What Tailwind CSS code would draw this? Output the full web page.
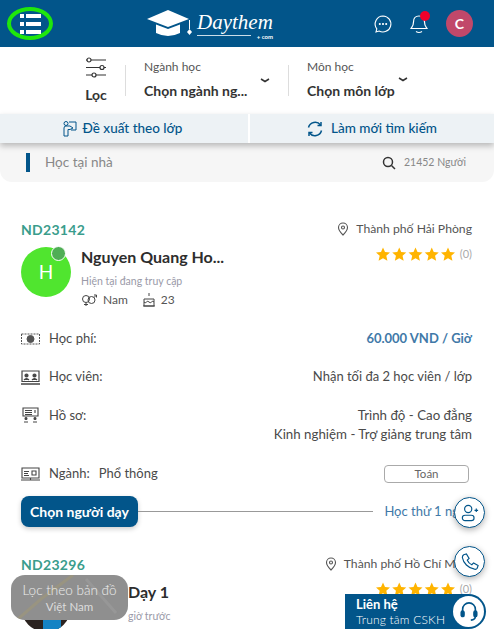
<!DOCTYPE html>
<html lang="vi">
<head>
    <meta charset="UTF-8">
    <meta name="viewport" content="width=device-width, initial-scale=1.0">
    <title>Daythem</title>
    <script src="https://cdn.jsdelivr.net/npm/@tailwindcss/browser@4"></script>
</head>
<body class="relative h-[629px] w-[494px] overflow-hidden bg-white font-['Lato','Noto_Sans',sans-serif] text-[13px] text-[#4a4a4a]">
    <!-- header -->
    <header class="flex h-[47px] items-center bg-[#02558a] pl-[7px] pr-[21px]">
        <button class="flex h-[33px] w-[46px] flex-col items-center justify-center gap-[4px] rounded-[50%] border-4 border-[#1fe60c]">
            <span class="flex h-[4px] w-[21px] gap-[2px]"><i class="w-[4px] bg-white"></i><i class="flex-1 bg-white"></i></span>
            <span class="flex h-[4px] w-[21px] gap-[2px]"><i class="w-[4px] bg-white"></i><i class="flex-1 bg-white"></i></span>
            <span class="flex h-[4px] w-[21px] gap-[2px]"><i class="w-[4px] bg-white"></i><i class="flex-1 bg-white"></i></span>
        </button>
        <div class="ml-[94px] flex items-center">
            <svg width="46" height="28" viewBox="0 0 46 28" fill="#fff">
                <path d="M21 0 42 9 21 17 0 9z"/>
                <path d="M9 14.500 21 19 33 14.500V23Q21 29 9 23z"/>
                <path d="M42 10h1v9h-1z"/>
                <path d="M42.500 19l2.500 3-2.500 3-2.500-3z"/>
            </svg>
            <div class="relative ml-[4px] h-[28px] w-[76px] text-white">
                <span class="block font-['Liberation_Serif',serif] text-[21px] leading-[24px] italic">Daythem</span>
                <span class="absolute top-[25px] left-0 h-px w-[54px] bg-white/80"></span>
                <span class="absolute right-0 top-[23px] text-[6px] leading-[7px] font-bold">+ com</span>
            </div>
        </div>
        <div class="ml-auto flex items-center">
            <svg width="20" height="20" viewBox="0 0 20 20" fill="none" stroke="#fff" stroke-width="1.100">
                <path d="M10 2a8 8 0 1 1-4 15l-3 1 .8-3.200A8 8 0 0 1 10 2z"/>
                <circle cx="6.800" cy="10" r=".5" fill="#fff"/><circle cx="10" cy="10" r=".5" fill="#fff"/><circle cx="13.200" cy="10" r=".5" fill="#fff"/>
            </svg>
            <div class="relative ml-[16px] h-[24px] w-[20px]">
                <svg width="20" height="24" viewBox="0 0 20 24" fill="none" stroke="#fff" stroke-width="1.200">
                    <path d="M10 4c-4 0-5.500 3-5.500 6 0 4-1.500 5-2.500 6.500h16c-1-1.500-2.500-2.500-2.500-6.500 0-3-1.500-6-5.500-6z"/>
                    <path d="M7 19.500q3 2 6 0"/>
                </svg>
                <span class="absolute -top-[1px] left-[11px] h-[10px] w-[10px] rounded-full bg-[#f0002a]"></span>
            </div>
            <div class="ml-[17px] flex h-[27px] w-[27px] items-center justify-center rounded-full bg-[#c1486a] text-[14px] font-bold text-white">C</div>
        </div>
    </header>

    <!-- filter -->
    <section class="flex h-[67px] items-start pt-[9px]">
        <div class="ml-[85px] flex w-[22px] flex-col items-center">
            <svg width="22" height="24" viewBox="0 0 22 24" fill="none" stroke="#333" stroke-width="1.200">
                <path d="M6 4h15M1 4h1M1 11.500h14M19 11.500h2M1 19h6M11 19h10"/>
                <circle cx="4" cy="4" r="2"/><circle cx="17" cy="11.500" r="2"/><circle cx="9" cy="19" r="2"/>
            </svg>
            <span class="mt-[4px] text-[14px] font-bold text-[#333]">Lọc</span>
        </div>
        <div class="mt-[9px] ml-[18px] h-[31px] w-px bg-[#ddd]"></div>
        <div class="ml-[18px] w-[121px]">
            <p class="mt-[2px] text-[12px] leading-[18px] text-[#555]">Ngành học</p>
            <p class="mt-[6px] text-[14px] leading-[18px] font-bold whitespace-nowrap text-[#333]">Chọn ngành ng...</p>
        </div>
        <svg class="mt-[21px] -ml-[5px]" width="10" height="7" viewBox="0 0 10 7" fill="none" stroke="#333" stroke-width="1.500"><path d="M1 2l4 2.500L9 2"/></svg>
        <div class="mt-[9px] ml-[18px] h-[31px] w-px bg-[#ddd]"></div>
        <div class="ml-[18px] w-[91px]">
            <p class="mt-[2px] text-[12px] leading-[18px] text-[#555]">Môn học</p>
            <p class="mt-[6px] text-[14px] leading-[18px] font-bold whitespace-nowrap text-[#333]">Chọn môn lớp</p>
        </div>
        <svg class="mt-[20px]" width="10" height="7" viewBox="0 0 10 7" fill="none" stroke="#333" stroke-width="1.500"><path d="M1 2l4 2.500L9 2"/></svg>
    </section>

    <!-- actions -->
    <section class="relative z-10 flex h-[29px] gap-[2px] shadow-[0_3px_6px_rgba(0,0,0,.25)]">
        <button class="flex flex-1 items-center justify-center gap-[6px] bg-[#edf2f5] pr-[4px] text-[13.500px] font-medium text-[#02558a]">
            <svg width="15" height="17" viewBox="0 0 15 17" fill="none" stroke="#02558a" stroke-width="1"><circle cx="4" cy="3.500" r="2"/><path d="M7 2h7v8H9M2 16V8q0-2 2-2h4l3 2-3 1.500H6V16z"/></svg>
            Đề xuất theo lớp
        </button>
        <button class="flex flex-1 items-center justify-center gap-[8px] bg-[#edf2f5] text-[13.500px] font-medium text-[#02558a]">
            <svg width="16" height="16" viewBox="0 0 16 16" fill="none" stroke="#02558a" stroke-width="1.500"><path d="M1.500 6.500A6.800 6.800 0 0 1 13.500 4M14.500 9.500A6.800 6.800 0 0 1 2.500 12"/><path d="M14 1v3.500h-3.500M2 15v-3.500h3.500"/></svg>
            Làm mới tìm kiếm
        </button>
    </section>

    <!-- search strip -->
    <section class="flex h-[39px] items-center rounded-b-xl bg-[#f6f6f6] pr-[28px] pl-[26px]">
        <span class="h-[19px] w-[4px] bg-[#02558a]"></span>
        <span class="ml-[15px] text-[13.500px] text-[#888]">Học tại nhà</span>
        <svg class="ml-auto" width="14" height="14" viewBox="0 0 14 14" fill="none" stroke="#333" stroke-width="1.500"><circle cx="6" cy="6" r="4.500"/><path d="M9.500 9.500 13 13"/></svg>
        <span class="ml-[8px] text-[10.500px] text-[#888]">21452 Người</span>
    </section>

    <!-- first card -->
    <article class="pt-[38px] pr-[22px] pl-[21px]">
        <div class="flex h-[18px] items-center justify-between">
            <span class="text-[14px] font-bold tracking-[.3px] text-[#3a9d8c]">ND23142</span>
            <span class="flex items-center gap-[7px] text-[12.200px] text-[#555]">
                <svg width="12" height="14" viewBox="0 0 12 14" fill="none" stroke="#555" stroke-width="1.100"><path d="M6 13S1.500 8.500 1.500 5.500a4.500 4.500 0 0 1 9 0C10.500 8.500 6 13 6 13z"/><circle cx="6" cy="5.500" r="1.500"/></svg>
                Thành phố Hải Phòng
            </span>
        </div>
        <div class="mt-[2px] flex items-start pt-[5px]">
            <div class="relative mt-[2px] flex h-[50px] w-[50px] shrink-0 items-center justify-center rounded-full bg-[#50e52f] text-[19px] text-white">
                H
                <span class="absolute -top-[1px] left-[30px] h-[15px] w-[15px] rounded-full border border-white bg-[#4fae55]"></span>
            </div>
            <div class="ml-[10px] min-w-0 flex-1 pt-[2px]">
                <p class="text-[16px] leading-[20px] font-bold text-[#2d2d2d]">Nguyen Quang Ho...</p>
                <p class="mt-[8px] text-[10.500px] leading-[13px] text-[#9a9aa8]">Hiện tại đang truy cập</p>
                <div class="mt-[3px] flex items-center text-[12px] text-[#555]">
                    <svg width="16" height="13" viewBox="0 0 16 13" fill="none" stroke="#444" stroke-width="1"><circle cx="5" cy="5" r="3.500"/><path d="M5 8.500V12M3 10.500h4"/><circle cx="10.500" cy="6" r="3.500"/><path d="M13 3.500l2-2M13 1h2.500v2.500"/></svg>
                    <span class="ml-[6px]">Nam</span>
                    <svg class="ml-[15px]" width="12" height="14" viewBox="0 0 12 14" fill="none" stroke="#444" stroke-width="1"><path d="M6 0v3M1 13V6h10v7zM0 13h12M1 9q1.200 1.500 2.500 0t2.500 0 2.500 0 2.500 0"/></svg>
                    <span class="ml-[6px]">23</span>
                </div>
            </div>
            <div class="mt-[1px] flex items-center gap-[5px]">
                <svg width="79" height="15" viewBox="0 0 79 15" fill="#ffb400"><path id="s1" d="M7 .5l2 4.500 5 .5-3.700 3.300 1.100 4.900L7 11.200l-4.400 2.500 1.100-4.900L0 5.500 5 5z"/><use href="#s1" x="16.250"/><use href="#s1" x="32.500"/><use href="#s1" x="48.750"/><use href="#s1" x="65"/></svg>
                <span class="text-[11px] text-[#aaa]">(0)</span>
            </div>
        </div>

        <div class="mt-[21px] flex h-[18px] items-center justify-between">
            <span class="flex items-center gap-[9px]">
                <svg width="19" height="12" viewBox="0 0 19 12" fill="none" stroke="#555" stroke-width="1"><path d="M.5 1h18v10H.5z" stroke-dasharray="2 1"/><circle cx="9.500" cy="6" r="3.500" fill="#555"/></svg>
                Học phí:
            </span>
            <span class="text-[13px] font-bold text-[#4179a8]">60.000 VND / Giờ</span>
        </div>
        <div class="mt-[20px] flex h-[18px] items-center justify-between">
            <span class="flex items-center gap-[9px]">
                <svg width="19" height="15" viewBox="0 0 19 15" fill="none" stroke="#444" stroke-width="1.200"><path d="M1 1h17v10.500H1z"/><path d="M0 14h19" stroke-width="1.500"/><circle cx="5.500" cy="5.500" r="1.500" fill="#444"/><circle cx="13.500" cy="5.500" r="1.500" fill="#444"/><path d="M3 10q2.500-3 5 0M11 10q2.500-3 5 0" fill="#444"/></svg>
                Học viên:
            </span>
            <span class="text-[13px]">Nhận tối đa 2 học viên / lớp</span>
        </div>
        <div class="mt-[20px] flex items-start justify-between">
            <span class="flex items-center gap-[9px] leading-[18px]">
                <svg width="19" height="16" viewBox="0 0 19 16" fill="none" stroke="#444" stroke-width="1.100"><path d="M2 1h15v8H2z"/><path d="M4 3.500h7M4 5.500h7M4 7.500h7M14 3v3"/><circle cx="5" cy="11.500" r="1" fill="#444"/><circle cx="14" cy="11.500" r="1" fill="#444"/><path d="M3 15h4M12 15h4"/></svg>
                Hồ sơ:
            </span>
            <span class="text-right text-[13.300px] leading-[19px]">Trình độ - Cao đẳng<br>Kinh nghiệm - Trợ giảng trung tâm</span>
        </div>
        <div class="mt-[21px] flex h-[18px] items-center">
            <svg width="19" height="15" viewBox="0 0 19 15" fill="none" stroke="#444" stroke-width="1.100"><path d="M1 1h17v10H1z"/><path d="M3 4.500h5M3 6.500h4M3 8.500h5M11 4h4v4h-4zM0 13h19M9.500 11v2"/></svg>
            <span class="ml-[9px]">Ngành:</span>
            <span class="ml-[9px]">Phổ thông</span>
            <span class="mr-[3px] ml-auto flex h-[18px] w-[85px] items-center justify-center rounded-[4px] border border-[#aaa] text-[11.500px] text-[#666]">Toán</span>
        </div>
        <div class="mt-[13px] flex h-[31px] items-center">
            <button class="h-[31px] w-[117px] shrink-0 rounded-lg bg-[#02558a] text-[14px] font-bold text-white shadow-[0_2px_5px_rgba(0,0,0,.2)]">Chọn người dạy</button>
            <span class="h-px flex-1 bg-[#999]"></span>
            <span class="ml-[11px] text-[13px] whitespace-nowrap text-[#4179a8]">Học thử 1 ngày</span>
        </div>
    </article>

    <!-- second card, cut off by the window -->
    <article class="pt-[28px] pr-[22px] pl-[21px]">
        <div class="flex h-[18px] items-center justify-between">
            <span class="text-[14px] font-bold tracking-[.3px] text-[#3a9d8c]">ND23296</span>
            <span class="flex items-center gap-[7px] text-[12.200px] text-[#555]">
                <svg width="12" height="14" viewBox="0 0 12 14" fill="none" stroke="#555" stroke-width="1.100"><path d="M6 13S1.500 8.500 1.500 5.500a4.500 4.500 0 0 1 9 0C10.500 8.500 6 13 6 13z"/><circle cx="6" cy="5.500" r="1.500"/></svg>
                Thành phố Hồ Chí Minh
            </span>
        </div>
        <div class="mt-[2px] flex items-start pt-[5px]">
            <div class="relative mt-[2px] h-[50px] w-[50px] shrink-0 overflow-hidden rounded-full bg-[#2b2320]">
                <span class="absolute top-[28px] left-[22px] h-[30px] w-[18px] rounded-t-lg bg-[#1583c4]"></span>
            </div>
            <div class="ml-[10px] min-w-0 flex-1 pt-[2px] pl-[47px]">
                <p class="text-[16px] leading-[20px] font-bold text-[#2d2d2d]">Dạy 1</p>
                <p class="mt-[8px] text-[10.500px] leading-[13px] text-[#9a9aa8]">giờ trước</p>
            </div>
            <div class="mt-[1px] flex items-center gap-[5px]">
                <svg width="79" height="15" viewBox="0 0 79 15" fill="#ffb400"><path id="s2" d="M7 .5l2 4.500 5 .5-3.700 3.300 1.100 4.900L7 11.200l-4.400 2.500 1.100-4.900L0 5.500 5 5z"/><use href="#s2" x="16.250"/><use href="#s2" x="32.500"/><use href="#s2" x="48.750"/><use href="#s2" x="65"/></svg>
                <span class="text-[11px] text-[#aaa]">(0)</span>
            </div>
        </div>
    </article>

    <!-- floating: map filter -->
    <div class="absolute top-[575px] left-[11px] h-[45px] w-[117px] overflow-hidden rounded-[14px] bg-[#8f8f8f] text-center text-white/85">
        <svg class="absolute inset-0" width="117" height="45" viewBox="0 0 117 45" fill="none"><path d="M6 45 30 24 62 0" stroke="#a39a74" stroke-width="3" opacity=".5"/><path d="M75 4l30 34" stroke="#a0a0a0" stroke-width="3" opacity=".5"/></svg>
        <p class="relative mt-[6px] text-[13.500px] leading-[18px] font-light">Lọc theo bản đồ</p>
        <p class="relative text-[11.500px] leading-[15px] text-white/70">Việt Nam</p>
    </div>

    <!-- floating: round buttons -->
    <button class="absolute top-[497px] left-[454px] flex h-[31px] w-[31px] items-center justify-center rounded-full border border-[#02558a] bg-white shadow-[0_2px_6px_rgba(0,0,0,.3)]">
        <svg width="18" height="18" viewBox="0 0 20 20" fill="none" stroke="#02558a" stroke-width="1.300"><circle cx="8" cy="5.500" r="4"/><rect x="1.500" y="12.500" width="13" height="6" rx="3"/><path d="M15 7h4M17 5v4"/></svg>
    </button>
    <button class="absolute top-[546px] left-[454px] flex h-[31px] w-[31px] items-center justify-center rounded-full border border-[#02558a] bg-white shadow-[0_2px_6px_rgba(0,0,0,.3)]">
        <svg width="18" height="18" viewBox="0 0 20 20" fill="none" stroke="#02558a" stroke-width="1.300"><path d="M3 2l3-1 3 5-2 2q1.500 3.500 5 5l2-2 5 3-1 3q-1 1.500-3 1C8 17 2.500 11 1.500 5Q1.500 3 3 2z"/></svg>
    </button>

    <!-- floating: contact -->
    <div class="absolute top-[594px] left-[345px] flex h-[35px] w-[141px] items-center rounded-l-xl rounded-r-full bg-[#02558a] pl-[11px] text-white">
        <div class="leading-[15px]">
            <p class="text-[13px] font-bold">Liên hệ</p>
            <p class="text-[12px] tracking-[.2px] font-light whitespace-nowrap">Trung tâm CSKH</p>
        </div>
        <span class="absolute top-[2px] right-[2px] flex h-[31px] w-[31px] items-center justify-center rounded-full bg-white">
            <svg width="20" height="22" viewBox="0 0 22 24" fill="none" stroke="#02558a" stroke-width="1.800"><path d="M4 12V9a7 7 0 0 1 14 0v3"/><rect x="2.500" y="11" width="3" height="6" rx="1.500" fill="#02558a"/><rect x="16.500" y="11" width="3" height="6" rx="1.500" fill="#02558a"/><path d="M18 17q0 3.500-5 4"/></svg>
        </span>
    </div>
</body>
</html>
